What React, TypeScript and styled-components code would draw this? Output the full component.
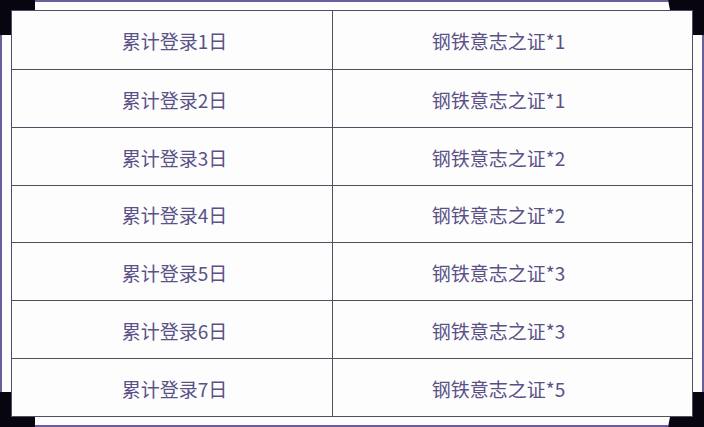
import React from 'react';
import styled, { createGlobalStyle } from 'styled-components';

const GlobalStyle = createGlobalStyle`
  html, body {
    margin: 0;
    padding: 0;
    background: #07050f;
  }
  body {
    font-family: "Noto Sans CJK SC", "Noto Sans", sans-serif;
  }
`;

const Frame = styled.div`
  width: 704px;
  height: 427px;
  background: #07050f;
  display: grid;
  grid-template-columns: 11px 1fr 11px;
  grid-template-rows: 10px 1fr 10px;
  overflow: hidden;
`;

const HStrip = styled.div<{ $side: 'top' | 'bottom' }>`
  grid-column: 2;
  grid-row: ${(p) => (p.$side === 'top' ? 1 : 3)};
  margin: 0 23px 0 24px;
  background: #fdfdfe;
  ${(p) => (p.$side === 'top' ? 'border-top' : 'border-bottom')}: 2px solid #6b5d9e;
  clip-path: ${(p) =>
    p.$side === 'top'
      ? 'polygon(0 0, calc(100% - 2px) 0, 100% 100%, 0 100%)'
      : 'polygon(0 0, 100% 0, calc(100% - 2px) 100%, 0 100%)'};
`;

const VStrip = styled.div<{ $side: 'left' | 'right' }>`
  grid-row: 2;
  grid-column: ${(p) => (p.$side === 'left' ? 1 : 3)};
  margin: 25px 0 25px 0;
  background: #fdfdfe;
  ${(p) => (p.$side === 'left' ? 'border-left' : 'border-right')}: 2px solid #6b5d9e;
`;

const Table = styled.div`
  grid-row: 2;
  grid-column: 2;
  position: relative;
  background: #fdfdfd;
  border: 1px solid #514e60;
  display: grid;
  grid-template-rows: repeat(7, 1fr);

  &::after {
    content: '';
    position: absolute;
    left: 320px;
    bottom: -6px;
    width: 1px;
    height: 6px;
    background: #514e60;
  }
`;

const Row = styled.div`
  display: grid;
  grid-template-columns: 320px 1fr;
  & + & {
    border-top: 1px solid #514e60;
  }
`;

const Cell = styled.div<{ $shift?: number }>`
  display: flex;
  align-items: center;
  justify-content: center;
  padding-top: 2px;
  padding-left: ${(p) => Math.max(0, p.$shift ?? 0)}px;
  padding-right: ${(p) => Math.max(0, -(p.$shift ?? 0))}px;
  font-size: 19px;
  color: #5a5187;
  & + & {
    border-left: 1px solid #514e60;
  }
`;

const rewards = [1, 1, 2, 2, 3, 3, 5];

export default function App() {
  return (
    <>
      <GlobalStyle />
      <Frame>
        <HStrip $side="top" />
        <VStrip $side="left" />
        <Table>
          {rewards.map((n, i) => (
            <Row key={i}>
              <Cell $shift={5}>累计登录{i + 1}日</Cell>
              <Cell $shift={-28}>钢铁意志之证*{n}</Cell>
            </Row>
          ))}
        </Table>
        <VStrip $side="right" />
        <HStrip $side="bottom" />
      </Frame>
    </>
  );
}
